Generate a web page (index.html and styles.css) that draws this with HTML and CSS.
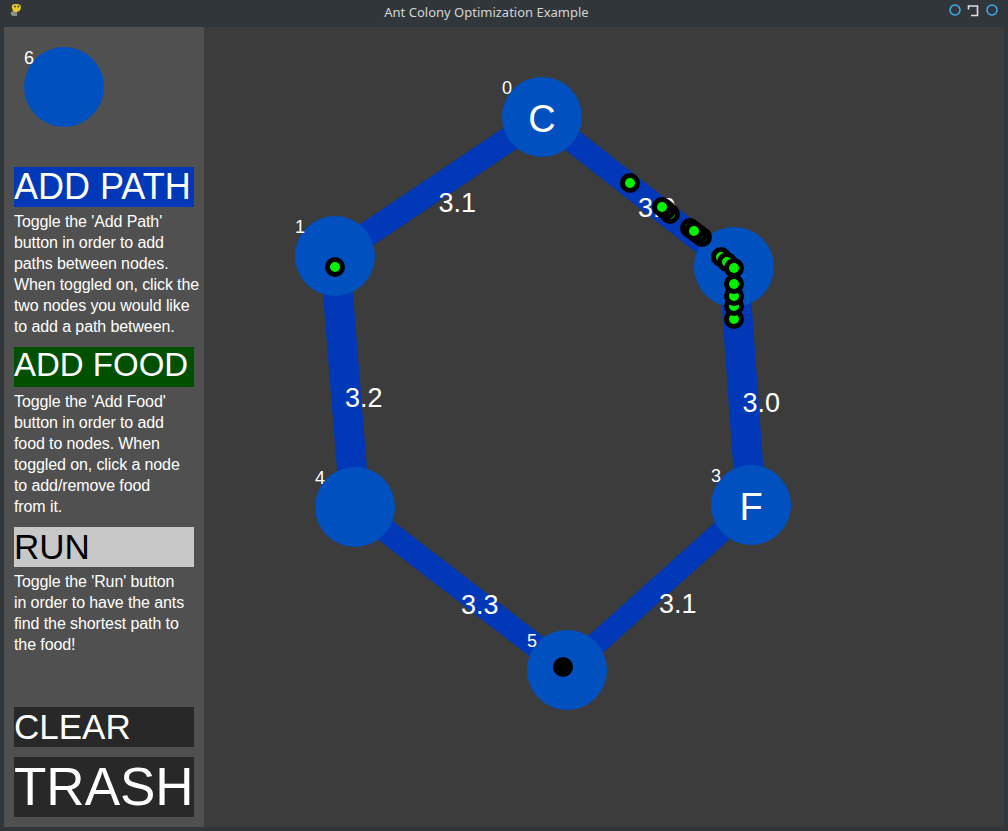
FILE: index.html
```html
<!DOCTYPE html>
<html>
<head>
<meta charset="utf-8">
<title>Ant Colony Optimization Example</title>
<link rel="stylesheet" href="styles.css">
</head>
<body>
<div class="window">
  <div class="titlebar">
    <div class="tb-icon">
      <svg width="28" height="27" viewBox="0 0 28 27">
        <path class="snake-body" d="M13 16 Q10 15 11 12 L13 11 Q15 13 17 12 L17 16 Z"/>
        <path class="snake-head" d="M12 8 Q11 4 15 4 Q21 3.5 21 7 Q21 11 17 12 Q14 12.5 13 11 Z"/>
        <circle class="snake-eye" cx="15" cy="6.5" r="0.9"/>
        <circle class="snake-eye" cx="18.5" cy="6.5" r="0.9"/>
      </svg>
    </div>
    <div class="tb-title">Ant Colony Optimization Example</div>
    <div class="tb-buttons">
      <svg width="63" height="27" viewBox="945 0 63 27">
        <circle class="tb-circle" cx="955" cy="10" r="5"/>
        <path class="tb-keep" d="M968.5 9.5 V6 H977.5 V15.5 H971"/>
        <circle class="tb-circle" cx="992" cy="10" r="5"/>
      </svg>
    </div>
  </div>
  <div class="content">
    <aside class="sidebar">
      <svg class="preview" width="180" height="140" viewBox="14 27 180 140">
        <circle class="node" cx="64" cy="87" r="40"/>
        <text class="node-num" x="24" y="64">6</text>
      </svg>
      <div class="btn btn-path">ADD PATH</div>
      <div class="desc">
        <span>Toggle the 'Add Path'</span>
        <span>button in order to add</span>
        <span>paths between nodes.</span>
        <span>When toggled on, click the</span>
        <span>two nodes you would like</span>
        <span>to add a path between.</span>
      </div>
      <div class="btn btn-food">ADD FOOD</div>
      <div class="desc">
        <span>Toggle the 'Add Food'</span>
        <span>button in order to add</span>
        <span>food to nodes. When</span>
        <span>toggled on, click a node</span>
        <span>to add/remove food</span>
        <span>from it.</span>
      </div>
      <div class="btn btn-run">RUN</div>
      <div class="desc">
        <span>Toggle the 'Run' button</span>
        <span>in order to have the ants</span>
        <span>find the shortest path to</span>
        <span>the food!</span>
      </div>
      <div class="btn btn-clear">CLEAR</div>
      <div class="btn btn-trash">TRASH</div>
    </aside>
    <svg class="canvas" width="800" height="800" viewBox="204 27 800 800">
      <g class="paths">
        <polygon points="542,102 335,241 335,271 542,132"/>
        <polygon points="542,102 734,252 734,282 542,132"/>
        <polygon points="320,256 340,507 370,507 350,256"/>
        <polygon points="719,267 736,505 766,505 749,267"/>
        <polygon points="355,492 567,655 567,685 355,522"/>
        <polygon points="751,490 567,655 567,685 751,520"/>
      </g>
      <g class="weights">
        <text x="438.5" y="211.5">3.1</text>
        <text x="638" y="217">3.0</text>
        <text x="345" y="407">3.2</text>
        <text x="742.5" y="411.5">3.0</text>
        <text x="461" y="614">3.3</text>
        <text x="659" y="613">3.1</text>
      </g>
      <g>
        <circle class="node" cx="542" cy="117" r="40"/>
        <circle class="node" cx="335" cy="256" r="40"/>
        <circle class="node" cx="734" cy="267" r="40"/>
        <circle class="node" cx="751" cy="505" r="40"/>
        <circle class="node" cx="355" cy="507" r="40"/>
        <circle class="node" cx="567" cy="670" r="40"/>
      </g>
      <g>
        <text class="node-num" x="502" y="93.5">0</text>
        <text class="node-num" x="295" y="232.5">1</text>
        <text class="node-num" x="694" y="243.5">2</text>
        <text class="node-num" x="711" y="481.5">3</text>
        <text class="node-num" x="315" y="483.5">4</text>
        <text class="node-num" x="527" y="646.5">5</text>
        <text class="node-letter" x="542" y="132">C</text>
        <text class="node-letter" x="751" y="520">F</text>
      </g>
      <g class="ants">
        <circle class="ant" cx="335" cy="267" r="10"/><circle class="ant-core" cx="335" cy="267" r="5"/>
        <circle class="ant" cx="670" cy="214" r="10"/><circle class="ant-core" cx="670" cy="214" r="5"/>
        <circle class="ant" cx="666" cy="210" r="10"/><circle class="ant-core" cx="666" cy="210" r="5"/>
        <circle class="ant" cx="662" cy="207" r="10"/><circle class="ant-core" cx="662" cy="207" r="5"/>
        <circle class="ant" cx="630" cy="183" r="10"/><circle class="ant-core" cx="630" cy="183" r="5"/>
        <circle class="ant" cx="702" cy="237" r="10"/><circle class="ant-core" cx="702" cy="237" r="5"/>
        <circle class="ant" cx="698" cy="234" r="10"/><circle class="ant-core" cx="698" cy="234" r="5"/>
        <circle class="ant" cx="690" cy="228" r="10"/><circle class="ant-core" cx="690" cy="228" r="5"/>
        <circle class="ant" cx="694" cy="231" r="10"/><circle class="ant-core" cx="694" cy="231" r="5"/>
        <circle class="ant" cx="734" cy="319" r="10"/><circle class="ant-core" cx="734" cy="319" r="5"/>
        <circle class="ant" cx="734" cy="306" r="10"/><circle class="ant-core" cx="734" cy="306" r="5"/>
        <circle class="ant" cx="734" cy="296" r="10"/><circle class="ant-core" cx="734" cy="296" r="5"/>
        <circle class="ant" cx="734" cy="284" r="10"/><circle class="ant-core" cx="734" cy="284" r="5"/>
        <circle class="ant" cx="721" cy="257" r="10"/><circle class="ant-core" cx="721" cy="257" r="5"/>
        <circle class="ant" cx="727" cy="262" r="10"/><circle class="ant-core" cx="727" cy="262" r="5"/>
        <circle class="ant" cx="734" cy="268" r="10"/><circle class="ant-core" cx="734" cy="268" r="5"/>
        <circle class="ant" cx="563" cy="667" r="10"/>
      </g>
    </svg>
  </div>
</div>
</body>
</html>
```
FILE: styles.css
```css
html, body {
  margin: 0;
  padding: 0;
}
body {
  background: #31363b;
  width: 1008px;
  height: 831px;
  overflow: hidden;
  font-family: "Liberation Sans", Arial, sans-serif;
}
.window {
  display: flex;
  flex-direction: column;
  width: 1008px;
  height: 831px;
}
.titlebar {
  height: 27px;
  display: flex;
  align-items: stretch;
  background: #31363b;
}
.tb-icon {
  width: 28px;
  height: 27px;
}
.tb-icon svg, .tb-buttons svg {
  display: block;
}
.snake-head { fill: #e8c92a; }
.snake-body { fill: #8d8f86; }
.snake-eye { fill: #3a3a2a; }
.tb-title {
  flex: 1;
  text-align: center;
  font-family: "Noto Sans", sans-serif;
  font-size: 13px;
  line-height: 25px;
  color: #d3d5d7;
}
.tb-buttons {
  width: 63px;
  height: 27px;
}
.tb-circle {
  fill: none;
  stroke: #3daee9;
  stroke-width: 1.5;
}
.tb-keep {
  fill: none;
  stroke: #dfe1e2;
  stroke-width: 1.6;
}
.content {
  display: flex;
  padding: 0 4px;
  height: 800px;
}
.sidebar {
  width: 200px;
  height: 800px;
  box-sizing: border-box;
  background: #505050;
  padding: 0 10px 10px;
  display: flex;
  flex-direction: column;
}
.preview {
  display: block;
  flex: none;
}
.btn {
  flex: none;
  width: 180px;
  height: 40px;
  line-height: 1.117;
  white-space: nowrap;
  overflow: hidden;
  color: #ffffff;
}
.btn-path {
  background: #0038b7;
  font-size: 36px;
}
.btn-food {
  background: #005000;
  font-size: 33px;
}
.btn-run {
  background: #c8c8c8;
  color: #000000;
  font-size: 35px;
}
.btn-clear {
  margin-top: auto;
  background: #282828;
  font-size: 35px;
}
.btn-trash {
  margin-top: 10px;
  height: 60px;
  background: #282828;
  font-size: 53px;
}
.desc {
  flex: none;
  margin: 4px 0 10px;
  font-size: 16px;
  line-height: 21px;
  letter-spacing: -0.1px;
  color: #ffffff;
}
.desc span {
  display: block;
  white-space: nowrap;
}
.canvas {
  display: block;
  flex: none;
  background: #3c3c3c;
}
.paths polygon {
  fill: #0038b7;
}
.node {
  fill: #0050c0;
}
.weights text {
  fill: #ffffff;
  font-family: "Liberation Sans", Arial, sans-serif;
  font-size: 27px;
}
.node-num {
  fill: #ffffff;
  font-family: "Liberation Sans", Arial, sans-serif;
  font-size: 18px;
}
.node-letter {
  fill: #ffffff;
  font-family: "Liberation Sans", Arial, sans-serif;
  font-size: 38px;
  text-anchor: middle;
}
.ant {
  fill: #000000;
}
.ant-core {
  fill: #00f000;
}
```
